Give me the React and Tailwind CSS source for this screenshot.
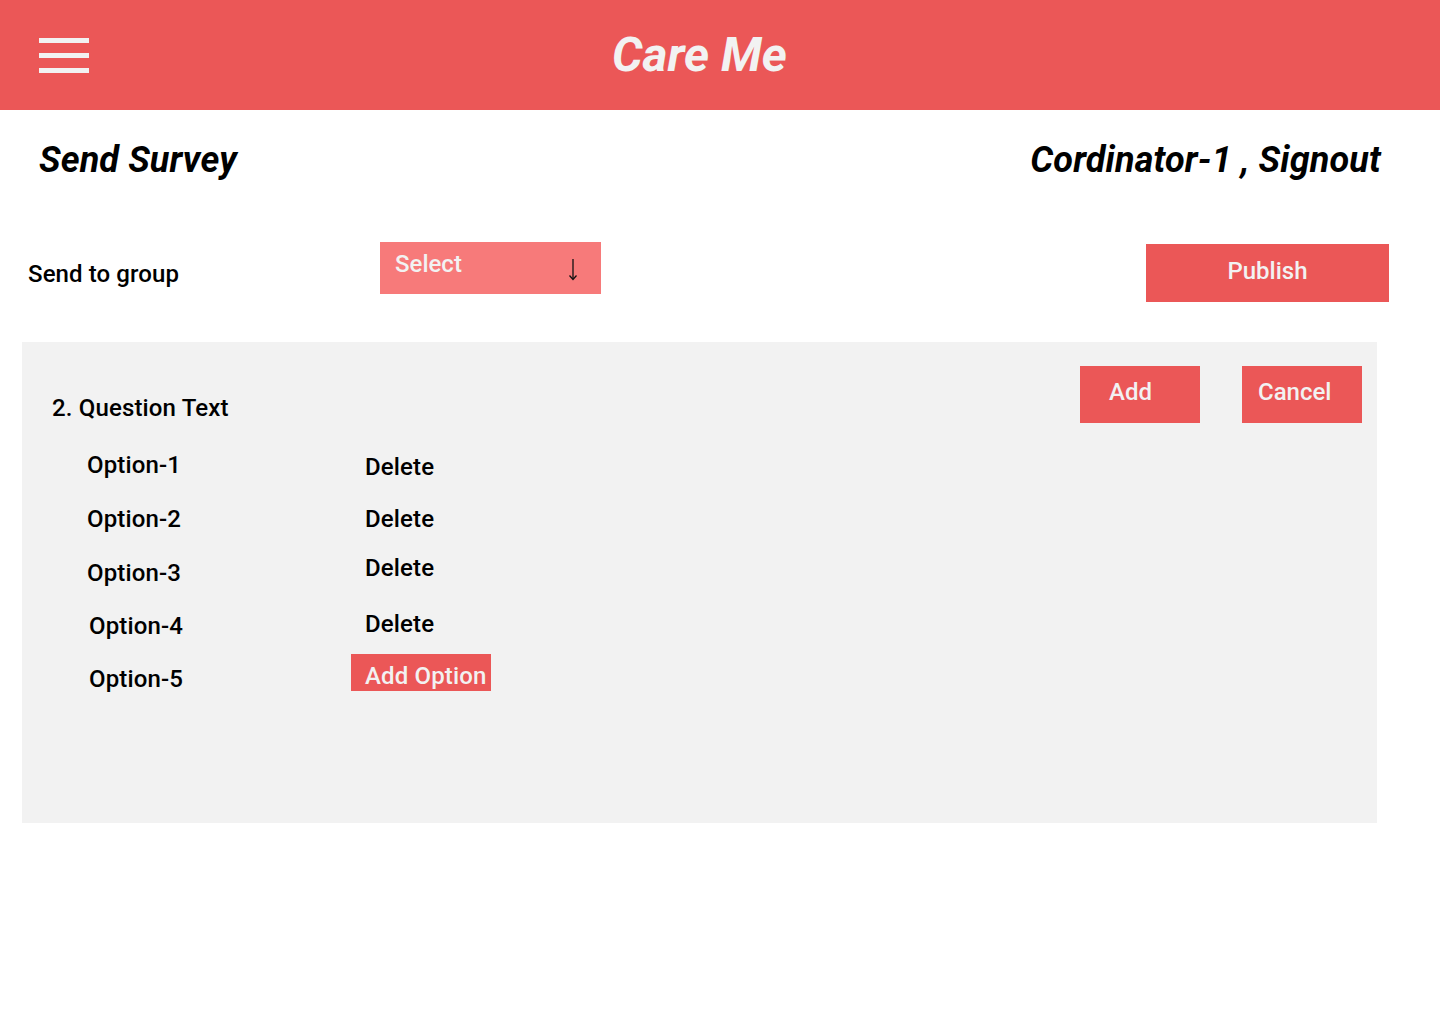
function App() {
  const font = { fontFamily: "Roboto, 'Noto Sans', sans-serif" };

  return (
    <div className="min-h-screen bg-white text-black" style={font}>

      {/* Header */}
      <header className="flex items-center h-[110px] bg-[#eb5757]">
        <div className="ml-[39px] flex flex-col gap-[10px] w-[50px]">
          <span className="block h-[5px] bg-[#f2f2f2]" />
          <span className="block h-[5px] bg-[#f2f2f2]" />
          <span className="block h-[5px] bg-[#f2f2f2]" />
        </div>
        <h1 className="ml-[523px] text-[48px] leading-[56px] font-bold italic text-[#f2f2f2]">
          Care Me
        </h1>
      </header>

      {/* Title row */}
      <div className="flex justify-between items-center h-[100px] pl-[39px] pr-[59px]">
        <h2 className="text-[36px] leading-[42px] font-bold italic tracking-[0.15px]">Send Survey</h2>
        <h2 className="text-[36px] leading-[42px] font-bold italic tracking-[0.15px]">Cordinator-1 , Signout</h2>
      </div>

      {/* Group row */}
      <div className="flex items-start h-[132px]">
        <p className="ml-[28px] mt-[50px] w-[352px] text-[24px] leading-[28px] font-medium tracking-[0.1px]">
          Send to group
        </p>
        <div className="mt-[32px] flex justify-between w-[221px] h-[52px] bg-[#f77a7a] pl-[15px] pr-[23px]">
          <span className="pt-[8px] text-[24px] leading-[28px] font-medium text-[#f2f2f2]">Select</span>
          <svg width="10" height="24" viewBox="0 0 10 24" className="mt-[16px]">
            <path d="M5 1 V21" stroke="#111" strokeWidth="1.3" fill="none" />
            <path d="M1.5 17.5 L5 21.5 L8.5 17.5" stroke="#111" strokeWidth="1.3" fill="none" />
          </svg>
        </div>
        <button className="ml-[545px] mt-[34px] w-[243px] h-[58px] pb-[4px] bg-[#eb5757] text-[24px] leading-[28px] font-medium text-[#f2f2f2]">
          Publish
        </button>
      </div>

      {/* Question panel */}
      <div className="ml-[22px] w-[1355px] h-[481px] bg-[#f2f2f2] flex justify-between">
        <div className="pl-[30px]">
          <p className="mt-[52px] text-[24px] leading-[28px] font-medium tracking-[0.15px]">2. Question Text</p>

          <div className="mt-[29px] pl-[35px] text-[24px] leading-[28px] font-medium tracking-[0.15px]">
            <div className="flex items-start h-[54px]">
              <span className="w-[264px]">Option-1</span>
              <span className="pl-[14px] mt-[2px]">Delete</span>
            </div>
            <div className="flex items-start h-[49px]">
              <span className="w-[264px]">Option-2</span>
              <span className="pl-[14px]">Delete</span>
            </div>
            <div className="flex items-start h-[56px]">
              <span className="w-[264px] mt-[5px]">Option-3</span>
              <span className="pl-[14px]">Delete</span>
            </div>
            <div className="flex items-start h-[44px]">
              <span className="w-[264px] mt-[2px] pl-[2px]">Option-4</span>
              <span className="pl-[14px]">Delete</span>
            </div>
            <div className="flex items-start">
              <span className="w-[264px] mt-[11px] pl-[2px]">Option-5</span>
              <button className="w-[140px] h-[37px] bg-[#eb5757] pl-[14px] pt-[7px] text-left text-[#f2f2f2] leading-[28px]">
                Add Option
              </button>
            </div>
          </div>
        </div>

        <div className="flex items-start gap-[42px] mt-[24px] pr-[15px]">
          <button className="w-[120px] h-[57px] pb-[5px] bg-[#eb5757] pl-[29px] text-left text-[24px] leading-[28px] font-medium text-[#f2f2f2]">
            Add
          </button>
          <button className="w-[120px] h-[57px] pb-[5px] bg-[#eb5757] pl-[16px] text-left text-[24px] leading-[28px] font-medium text-[#f2f2f2]">
            Cancel
          </button>
        </div>
      </div>

    </div>
  );
}

export default App;
